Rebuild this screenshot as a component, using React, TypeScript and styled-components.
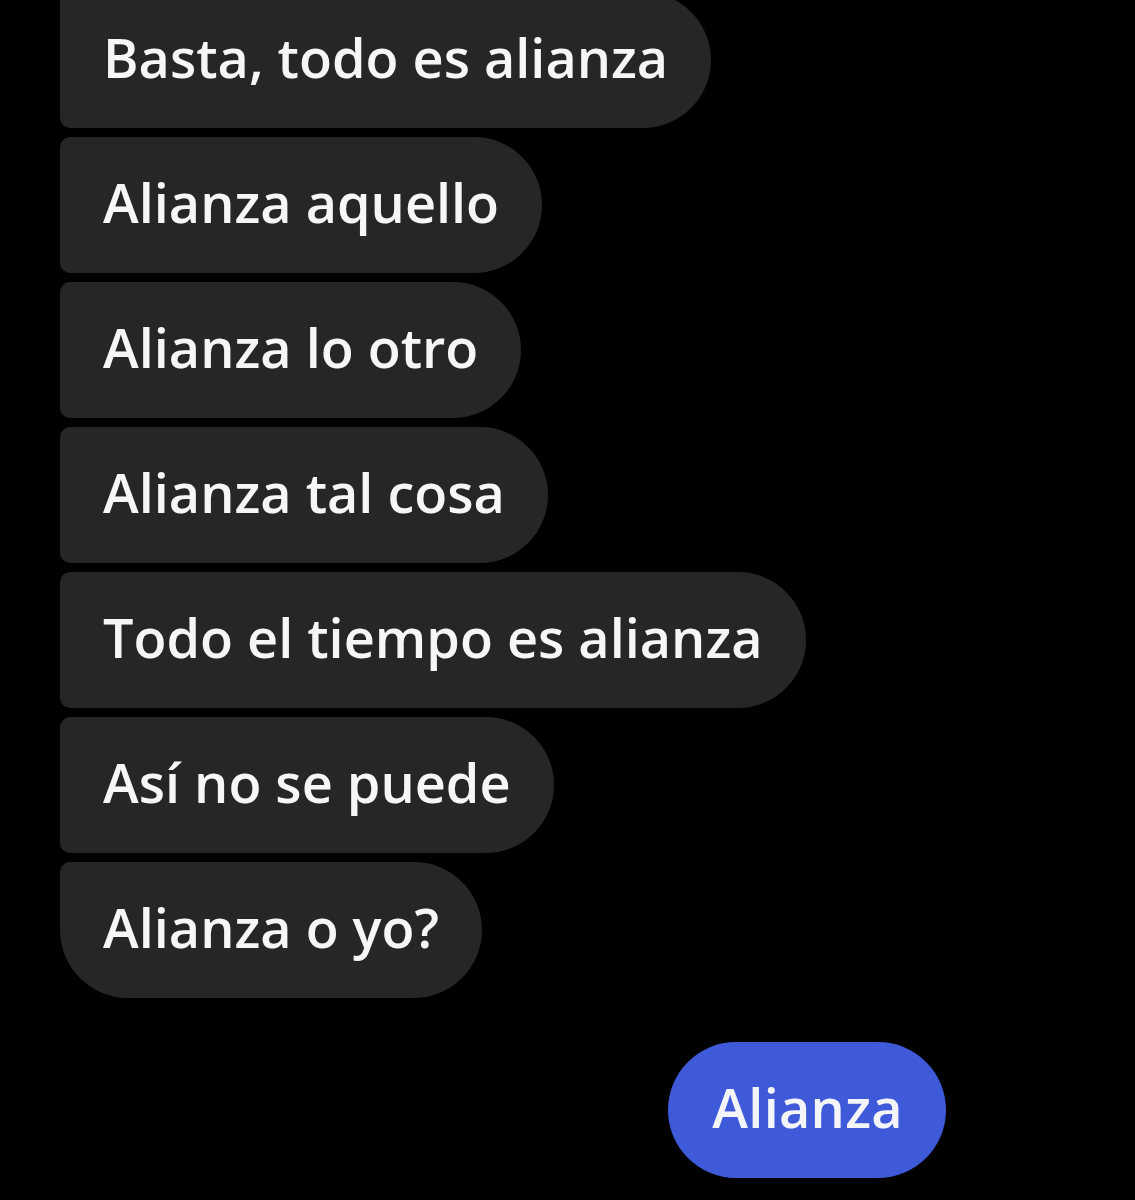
import styled, { createGlobalStyle, css } from "styled-components";

const GlobalStyle = createGlobalStyle`
  html, body {
    margin: 0;
    padding: 0;
    background: #000;
  }
  body {
    font-family: "Open Sans", "Noto Sans", sans-serif;
    overflow: hidden;
  }
`;

const Thread = styled.div`
  display: flex;
  flex-direction: column;
  align-items: flex-start;
  gap: 9px;
  padding: 0 0 0 60px;
  margin-top: -8px;
  height: 1208px;
  box-sizing: border-box;
`;

type Pos = { last?: boolean };

const Received = styled.div<Pos>`
  display: flex;
  align-items: center;
  height: 136px;
  box-sizing: border-box;
  padding: 0 43px 6px;
  background: #262626;
  color: #f6f6f6;
  font-size: 54px;
  font-weight: 600;
  letter-spacing: 0;
  white-space: nowrap;
  border-radius: 10px 68px 68px 10px;

  ${(props) =>
    props.last
      ? css`
          border-bottom-left-radius: 68px;
        `
      : ""}
`;

const Sent = styled.div`
  display: flex;
  align-items: center;
  align-self: flex-end;
  height: 136px;
  box-sizing: border-box;
  padding: 0 43px 6px 44px;
  margin: 35px 189px 0 0;
  background: #3f5ad8;
  color: #f4f4fb;
  font-size: 54px;
  font-weight: 600;
  letter-spacing: 0.3px;
  border-radius: 68px;
`;

const messages = [
  "Basta, todo es alianza",
  "Alianza aquello",
  "Alianza lo otro",
  "Alianza tal cosa",
  "Todo el tiempo es alianza",
  "Así no se puede",
  "Alianza o yo?",
];

export default function App() {
  return (
    <>
      <GlobalStyle />
      <Thread>
        {messages.map((m, i) => (
          <Received key={i} last={i === messages.length - 1}>
            {m}
          </Received>
        ))}
        <Sent>Alianza</Sent>
      </Thread>
    </>
  );
}
